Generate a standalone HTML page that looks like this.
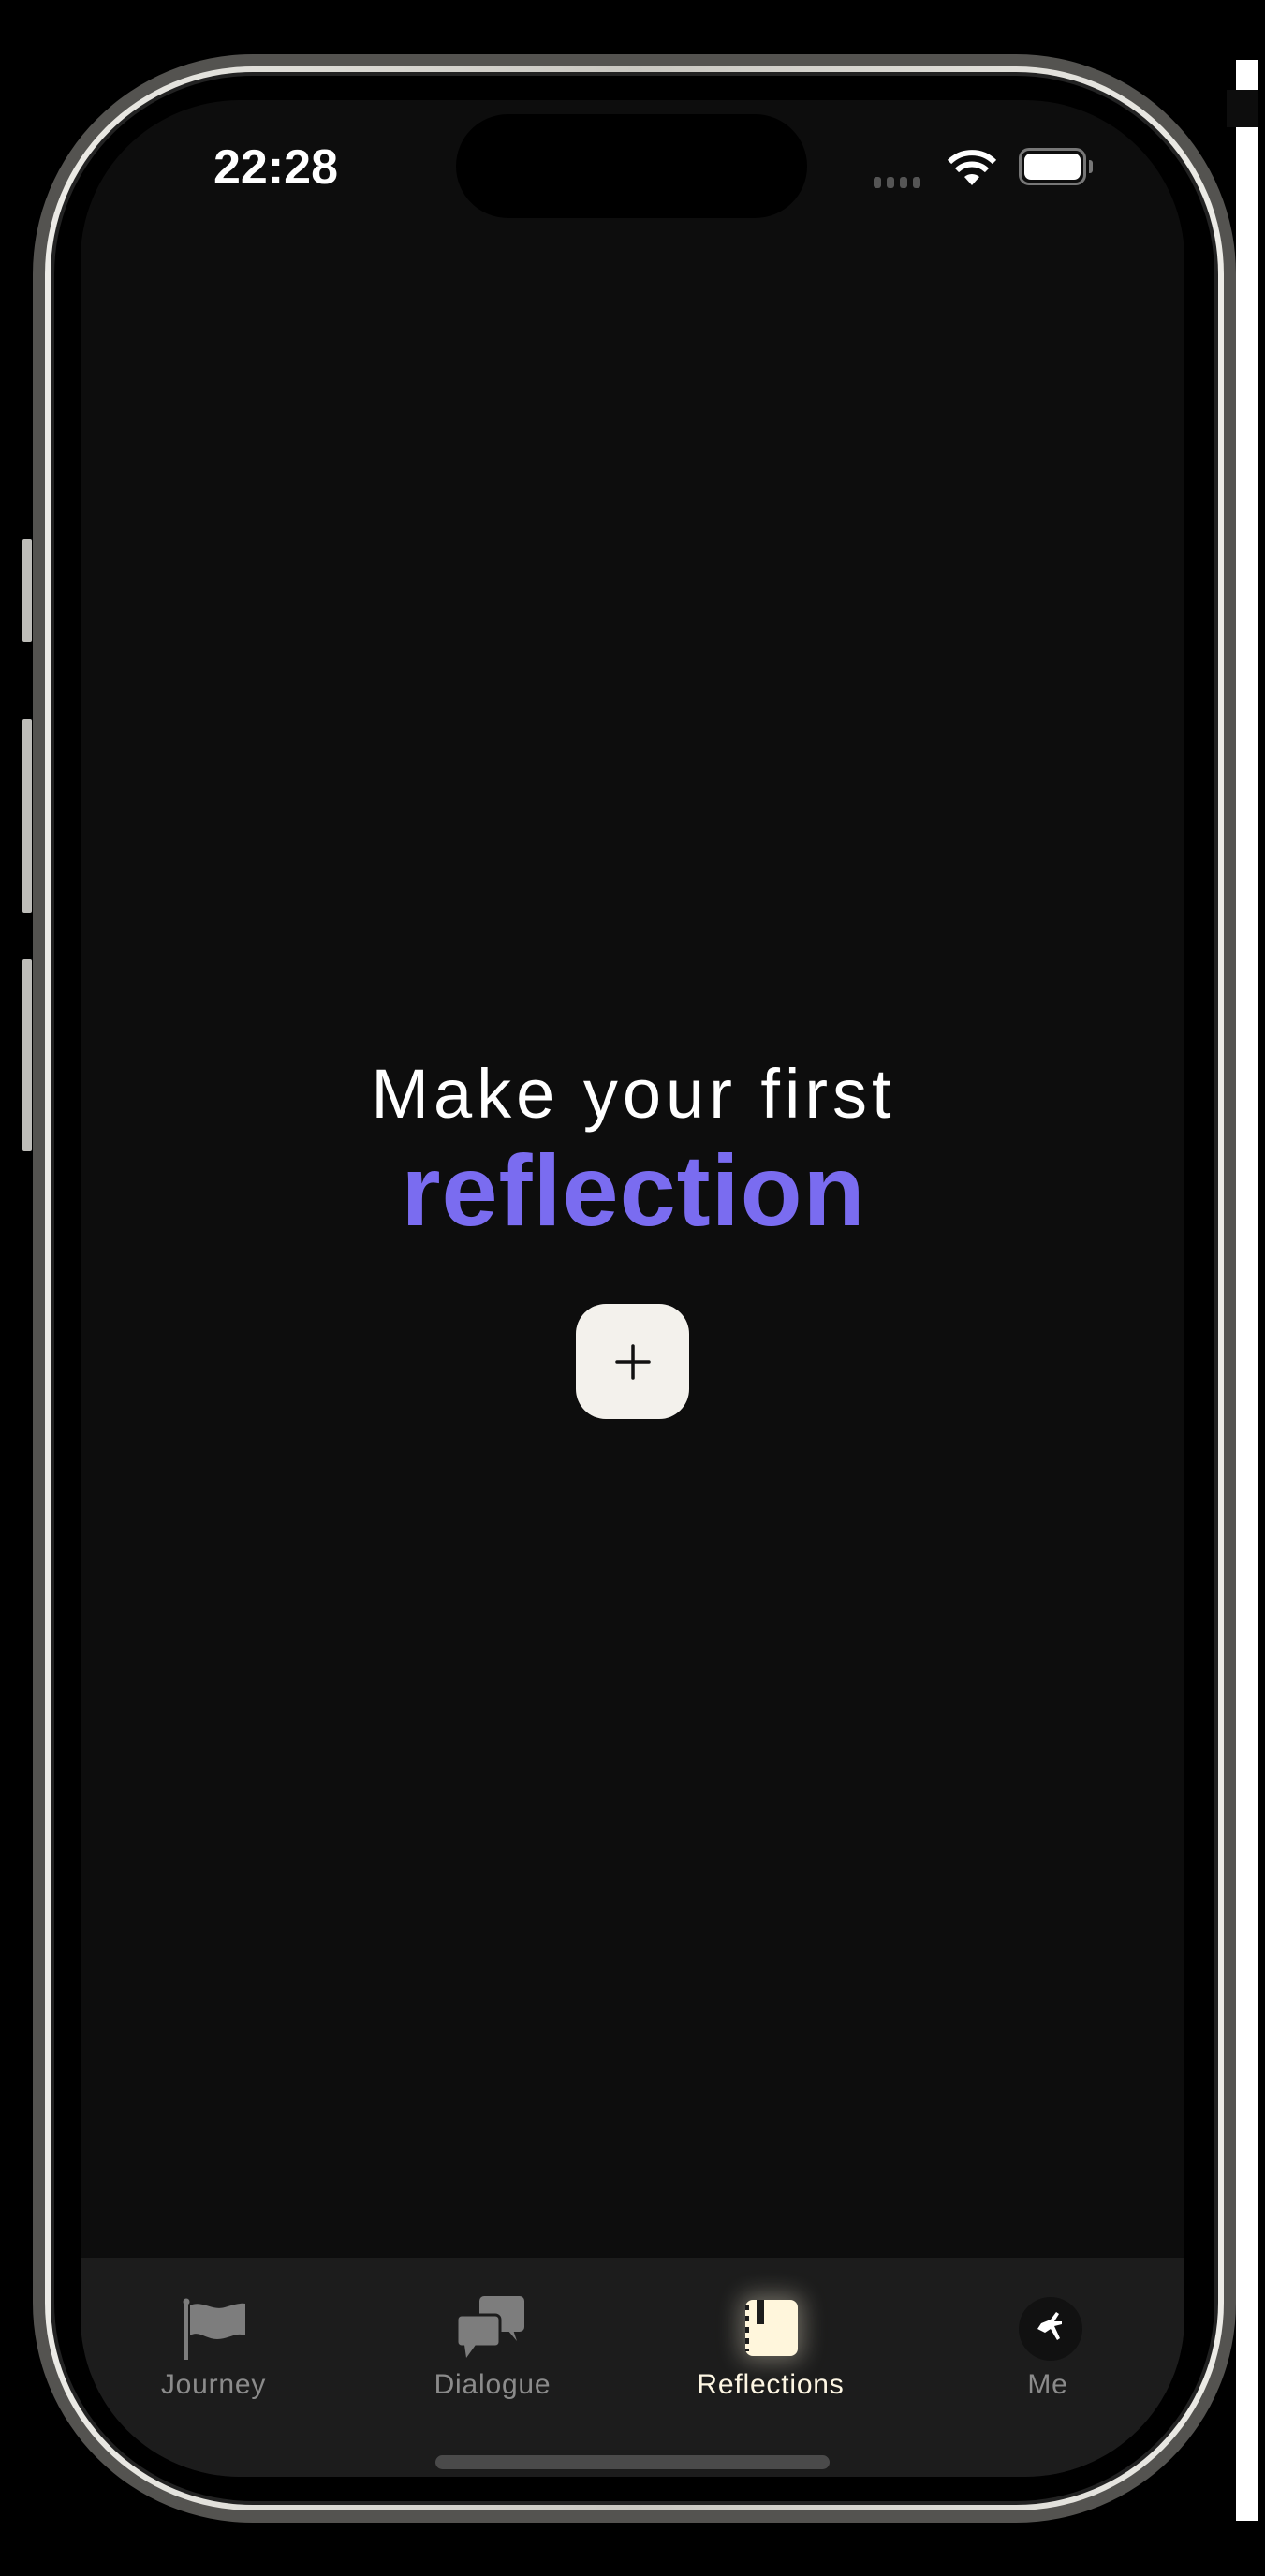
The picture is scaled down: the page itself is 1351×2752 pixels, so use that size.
<!DOCTYPE html>
<html><head><meta charset="utf-8"><style>
*{margin:0;padding:0;box-sizing:border-box}
html,body{width:1351px;height:2752px;background:#000;overflow:hidden;font-family:"Liberation Sans",sans-serif}
.abs{position:absolute}
.white{left:1320px;top:64px;width:24px;height:2629px;background:#fff}
.frame{left:35px;top:58px;width:1285px;height:2637px;border-radius:235px;background:#545350}
.f2{left:13px;top:13px;right:13px;bottom:13px;border-radius:222px;background:linear-gradient(90deg,#ecebe6,#c9c7c1 50%,#ecebe6)}
.f3{left:19px;top:19px;right:19px;bottom:19px;border-radius:216px;background:#222}
.f4{left:23px;top:23px;right:23px;bottom:23px;border-radius:212px;background:#000}
.btn{background:#bdbcb8;width:10px;border-radius:2px}
.screen{left:86px;top:107px;width:1179px;height:2539px;border-radius:170px;background:#0d0d0d;overflow:hidden}
.tab{position:absolute;top:2305px;left:0;width:1181px;height:240px;background:#1c1c1c}
.lbl{position:absolute;top:2426px;width:260px;margin-left:-130px;text-align:center;font-size:30px;letter-spacing:0.8px;line-height:1;color:#8b8b8b}
</style></head><body>
<div class="abs white"></div>
<div class="abs" style="left:1310px;top:96px;width:34px;height:40px;background:#0d0d0d"></div>
<div class="abs btn" style="left:24px;top:576px;height:110px"></div>
<div class="abs btn" style="left:24px;top:768px;height:207px"></div>
<div class="abs btn" style="left:24px;top:1025px;height:205px"></div>
<div class="abs btn" style="left:1310px;top:910px;height:322px;background:#8a8985"></div>
<div class="abs frame"><div class="abs f2"></div><div class="abs f3"></div><div class="abs f4"></div></div>
<div class="abs screen">
  <div class="abs" style="left:142px;top:46px;font-size:52px;font-weight:bold;color:#fff;line-height:1">22:28</div>
  <div class="abs" style="left:401px;top:15px;width:375px;height:111px;border-radius:56px;background:#000"></div>
  <div class="abs" style="left:847px;top:82px;display:flex;gap:6px">
    <span style="width:8px;height:12px;border-radius:3px;background:#555"></span><span style="width:8px;height:12px;border-radius:3px;background:#555"></span><span style="width:8px;height:12px;border-radius:3px;background:#555"></span><span style="width:8px;height:12px;border-radius:3px;background:#555"></span>
  </div>
  <svg class="abs" style="left:924px;top:53px" width="56" height="40" viewBox="0 0 56 40"><path d="M28 38 L20 29 A12 12 0 0 1 36 29 Z" fill="#fff"/><path d="M12 22 A23 23 0 0 1 44 22" stroke="#fff" stroke-width="6" fill="none"/><path d="M4 13 A34 34 0 0 1 52 13" stroke="#fff" stroke-width="6" fill="none"/></svg>
  <div class="abs" style="left:1002px;top:51px;width:72px;height:40px;border:3px solid #777;border-radius:11px;padding:3px"><div style="width:100%;height:100%;background:#fff;border-radius:7px"></div></div>
  <div class="abs" style="left:1077px;top:64px;width:4px;height:14px;background:#777;border-radius:0 3px 3px 0"></div>

  <div class="abs" style="left:0;width:1181px;top:1025px;text-align:center;font-size:74px;line-height:1;color:#fff;letter-spacing:5px">Make your first</div>
  <div class="abs" style="left:0;width:1181px;top:1111px;text-align:center;font-size:108px;line-height:1;color:#7a6cf0;font-weight:bold;letter-spacing:1px">reflection</div>
  <div class="abs" style="left:529px;top:1286px;width:121px;height:123px;border-radius:32px;background:#f3f1ec"></div>
  <svg class="abs" style="left:571px;top:1329px" width="38" height="38" viewBox="0 0 38 38"><path d="M19 2V36M2 19H36" stroke="#111" stroke-width="3.5" stroke-linecap="round"/></svg>

  <div class="tab"></div>
  <svg class="abs" style="left:108px;top:2348px" width="72" height="66" viewBox="0 0 72 66"><circle cx="5" cy="4" r="3.5" fill="#7d7d7d"/><rect x="3" y="4" width="4" height="62" fill="#7d7d7d"/><path d="M9 8 C22 2 32 14 46 10 C56 7 64 5 68 6 V40 C58 36 50 44 38 44 C26 44 18 34 9 40 Z" fill="#7d7d7d"/></svg>
  <svg class="abs" style="left:402px;top:2346px" width="76" height="68" viewBox="0 0 76 68"><rect x="24" y="0" width="48" height="38" rx="5" fill="#7d7d7d"/><path d="M60 36 L64 48 L54 36Z" fill="#7d7d7d"/><rect x="0" y="20" width="46" height="34" rx="5" fill="#7d7d7d" stroke="#1c1c1c" stroke-width="3"/><path d="M8 52 L10 66 L20 52Z" fill="#7d7d7d"/></svg>
  <div class="abs" style="left:710px;top:2350px;width:56px;height:60px;border-radius:8px;background:#fff6dc;box-shadow:0 0 24px 6px rgba(255,246,220,.35)"></div>
  <div class="abs" style="left:722px;top:2350px;width:8px;height:26px;background:#1c1c1c"></div>
  <div class="abs" style="left:710px;top:2355px;width:4px;height:50px;background:repeating-linear-gradient(#1c1c1c 0 6px,#fff6dc 6px 12px)"></div>
  <div class="abs" style="left:1002px;top:2347px;width:68px;height:68px;border-radius:50%;background:#111"></div>
  <svg class="abs" style="left:1012px;top:2357px" width="48" height="48" viewBox="0 0 48 48"><path d="M14 18 L24 14 L30 6 L33 8 L28 16 L36 16 L36 19 L28 21 L34 34 L31 36 L24 24 L18 28 L10 24 Z" fill="#fff"/></svg>
  <div class="lbl" style="left:142px">Journey</div>
  <div class="lbl" style="left:440px">Dialogue</div>
  <div class="lbl" style="left:737px;color:#fdf6e3">Reflections</div>
  <div class="lbl" style="left:1033px">Me</div>
  <div class="abs" style="left:379px;top:2516px;width:421px;height:15px;border-radius:8px;background:#4a4a4a"></div>
</div>
</body></html>
